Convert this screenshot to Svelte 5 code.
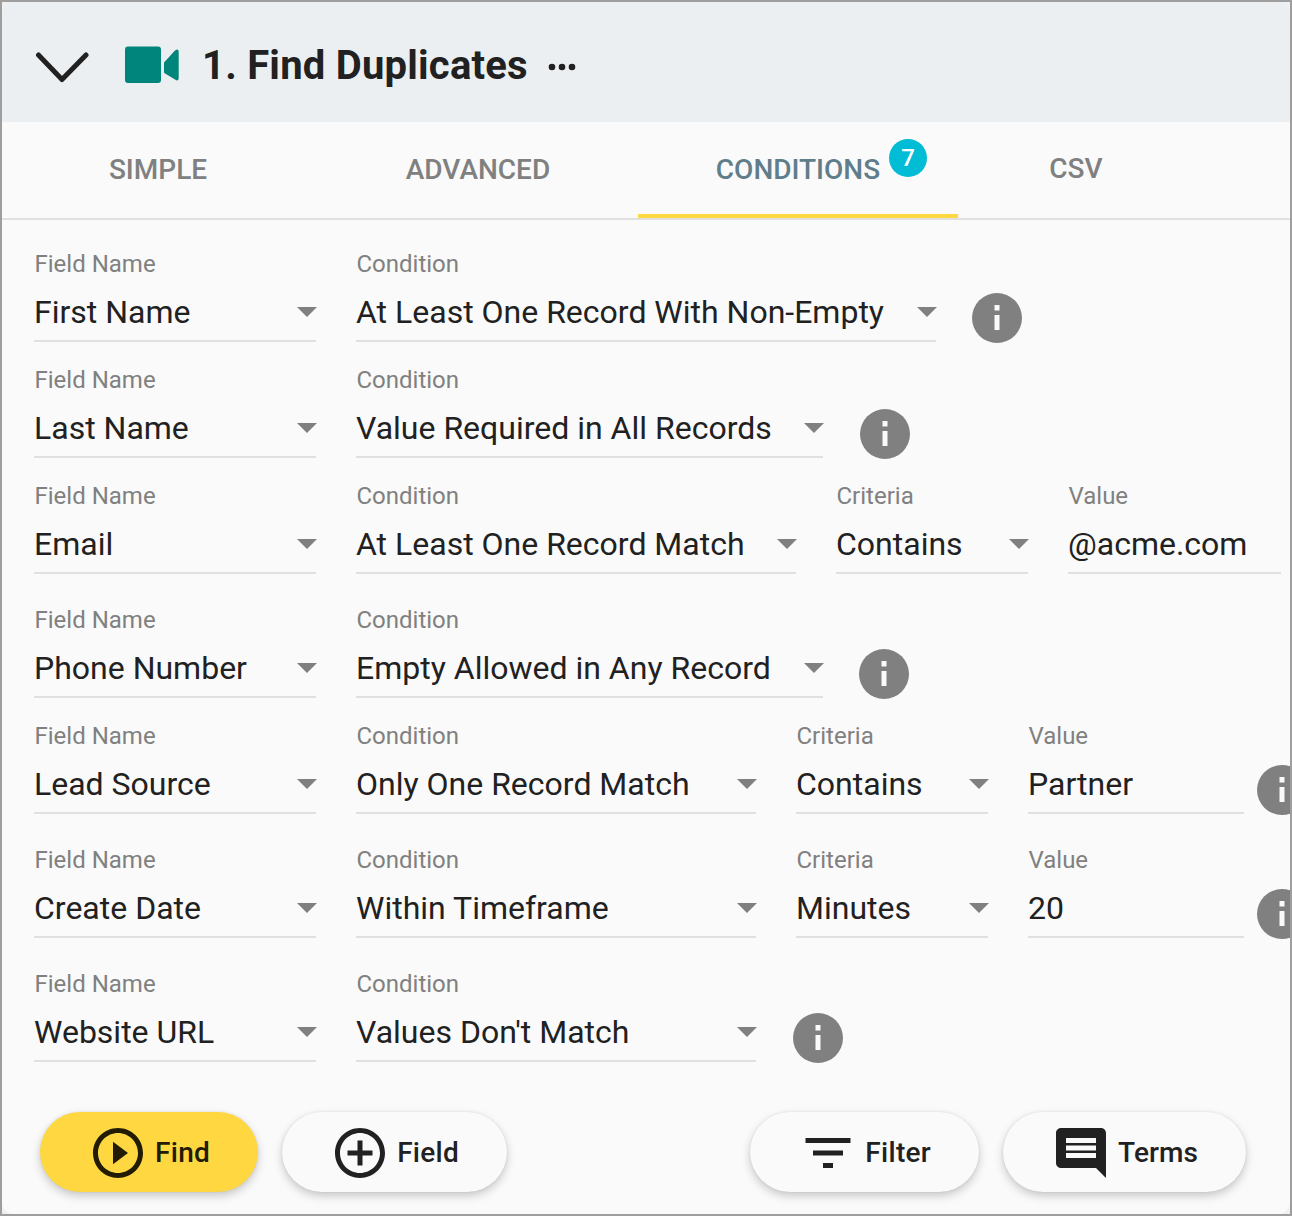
<script>
  const sel = (label, value, w) => ({ label, value, w, arrow: true });
  const txt = (label, value, w) => ({ label, value, w, arrow: false });
  const rows = [
    { cls: '', info: 'far', fields: [sel('Field Name', 'First Name', 'w282'), sel('Condition', 'At Least One Record With Non-Empty', 'w580')] },
    { cls: '', info: 'mid', fields: [sel('Field Name', 'Last Name', 'w282'), sel('Condition', 'Value Required in All Records', 'w467')] },
    { cls: 'tall', info: '', fields: [sel('Field Name', 'Email', 'w282'), sel('Condition', 'At Least One Record Match', 'w440'), sel('Criteria', 'Contains', 'w192'), txt('Value', '@acme.com', 'w213')] },
    { cls: '', info: 'far', fields: [sel('Field Name', 'Phone Number', 'w282'), sel('Condition', 'Empty Allowed in Any Record', 'w467')] },
    { cls: 'tall', info: 'near', fields: [sel('Field Name', 'Lead Source', 'w282'), sel('Condition', 'Only One Record Match', 'w400'), sel('Criteria', 'Contains', 'w192'), txt('Value', 'Partner', 'w216')] },
    { cls: 'tall', info: 'near', fields: [sel('Field Name', 'Create Date', 'w282'), sel('Condition', 'Within Timeframe', 'w400'), sel('Criteria', 'Minutes', 'w192'), txt('Value', '20', 'w216')] },
    { cls: '', info: 'mid', fields: [sel('Field Name', 'Website URL', 'w282'), sel('Condition', "Values Don't Match", 'w400')] }
  ];
</script>

<div class="frame">
  <div class="card">
    <header class="head">
      <svg class="chev" width="54" height="32" viewBox="0 0 54 32"><path d="M3.500 4L27 28.500 51 4" fill="none" stroke="#212121" stroke-width="5" stroke-linecap="round" stroke-linejoin="round"/></svg>
      <svg class="cam" width="56" height="38" viewBox="0 0 56 38"><rect x="0" y="0.500" width="36" height="36.500" rx="3" fill="#00857c"/><path d="M39 16.500L50 4.500Q53.700 2 53.700 6V32Q53.700 36 50 33.500L40 27.500Q39 27 39 26Z" fill="#00857c"/></svg>
      <h1>1. Find Duplicates</h1>
      <svg class="dots" width="28" height="8" viewBox="0 0 28 8"><circle cx="4" cy="4" r="3.300" fill="#212121"/><circle cx="14" cy="4" r="3.300" fill="#212121"/><circle cx="24" cy="4" r="3.300" fill="#212121"/></svg>
    </header>

    <nav class="tabs">
      <div class="tab">SIMPLE</div>
      <div class="tab">ADVANCED</div>
      <div class="tab active">CONDITIONS<span class="badge">7</span></div>
      <div class="tab csv">CSV</div>
    </nav>

    <main class="rows">
      {#each rows as row}
        <div class="row {row.cls}">
          {#each row.fields as f}
            <div class="field {f.w}">
              <div class="label">{f.label}</div>
              <div class="value">
                <span>{f.value}</span>
                {#if f.arrow}<i class="arrow"></i>{/if}
              </div>
            </div>
          {/each}
          {#if row.info}
            <div class="info {row.info}">
              <svg width="50" height="50" viewBox="0 0 50 50"><circle cx="25" cy="25" r="25" fill="#808080"/><rect x="22.500" y="22" width="5" height="15" fill="#fafafa"/><rect x="22.500" y="12" width="5" height="5.500" fill="#fafafa"/></svg>
            </div>
          {/if}
        </div>
      {/each}
    </main>

    <footer class="actions">
      <div class="group">
        <button class="btn primary">
          <svg width="60" height="60" viewBox="0 0 24 24"><path fill="currentColor" d="M10 16.500l6-4.500-6-4.500v9zM12 2C6.480 2 2 6.480 2 12s4.480 10 10 10 10-4.480 10-10S17.520 2 12 2zm0 18c-4.410 0-8-3.590-8-8s3.590-8 8-8 8 3.590 8 8-3.590 8-8 8z"/></svg>
          Find
        </button>
        <button class="btn">
          <svg width="60" height="60" viewBox="0 0 24 24"><path fill="currentColor" d="M13 7h-2v4H7v2h4v4h2v-4h4v-2h-4V7zm-1-5C6.480 2 2 6.480 2 12s4.480 10 10 10 10-4.480 10-10S17.520 2 12 2zm0 18c-4.410 0-8-3.590-8-8s3.590-8 8-8 8 3.590 8 8-3.590 8-8 8z"/></svg>
          Field
        </button>
      </div>
      <div class="group">
        <button class="btn">
          <svg width="60" height="60" viewBox="0 0 24 24"><path fill="currentColor" d="M10 18h4v-2h-4v2zM3 6v2h18V6H3zm3 7h12v-2H6v2z"/></svg>
          Filter
        </button>
        <button class="btn tight">
          <svg width="60" height="60" viewBox="0 0 24 24"><path fill="currentColor" d="M21.990 4c0-1.100-.890-2-1.990-2H4c-1.100 0-2 .900-2 2v12c0 1.100.900 2 2 2h14l4 4-.010-18zM18 14H6v-2h12v2zm0-3H6V9h12v2zm0-3H6V6h12v2z"/></svg>
          Terms
        </button>
      </div>
    </footer>
  </div>
</div>

<style>
  :global(body) { margin: 0; background: #fff; }
  .frame {
    width: 1292px;
    height: 1216px;
    box-sizing: border-box;
    border: 2px solid #9e9e9e;
    background: #f0f0f0;
    font-family: Roboto, sans-serif;
    color: #212121;
  }
  .card {
    height: 100%;
    border-radius: 12px;
    overflow: hidden;
    background: #fafafa;
    display: flex;
    flex-direction: column;
  }
  .head {
    height: 120px;
    flex: none;
    background: #eceff1;
    display: flex;
    align-items: center;
    padding-left: 33px;
  }
  .chev { margin-top: 10px; }
  .cam { margin-left: 36px; margin-top: 6px; }
  h1 { margin: 8px 0 0 21px; font-size: 40px; font-weight: 700; line-height: 48px; white-space: nowrap; letter-spacing: 0.22px; }
  .dots { margin-left: 20px; margin-top: 10px; }

  .tabs {
    height: 98px;
    flex: none;
    box-sizing: border-box;
    border-bottom: 2px solid #e0e0e0;
    display: flex;
  }
  .tab {
    position: relative;
    width: 320px;
    height: 96px;
    box-sizing: border-box;
    display: flex;
    align-items: center;
    justify-content: center;
    font-size: 28px;
    font-weight: 500;
    color: #808080;
    padding-bottom: 2px;
  }
  .tab:first-child { margin-left: -4px; }
  .tab.active { color: #607d8b; padding-bottom: 1px; }
  .tab.active::after {
    content: '';
    position: absolute;
    left: 0;
    right: 0;
    bottom: 0;
    height: 4px;
    background: #ffd740;
  }
  .tab.csv { width: 236px; padding-bottom: 4px; }
  .badge {
    position: absolute;
    left: 251px;
    top: 17px;
    width: 38px;
    height: 38px;
    border-radius: 50%;
    background: #00bcd4;
    color: #fff;
    font-size: 24px;
    font-weight: 500;
    display: flex;
    align-items: center;
    justify-content: center;
  }

  .rows { padding: 30px 0 0 32px; flex: none; }
  .row { display: flex; align-items: flex-start; gap: 40px; margin-bottom: 24px; white-space: nowrap; }
  .row.tall { margin-bottom: 32px; }
  .field { flex: none; height: 92px; box-sizing: border-box; border-bottom: 2px solid #e0e0e0; }
  .w282 { width: 282px; }
  .w580 { width: 580px; }
  .w467 { width: 467px; }
  .w440 { width: 440px; }
  .w400 { width: 400px; }
  .w192 { width: 192px; }
  .w213 { width: 213px; }
  .w216 { width: 216px; }
  .label { height: 28px; line-height: 28px; font-size: 24px; color: #808080; padding-left: 0.500px; }
  .value { position: relative; height: 62px; display: flex; align-items: center; justify-content: space-between; font-size: 32px; padding-top: 6px; box-sizing: border-box; }
  .arrow {
    width: 0;
    height: 0;
    border-left: 10px solid transparent;
    border-right: 10px solid transparent;
    border-top: 10px solid #808080;
    margin-right: -1px;
    margin-top: -1px;
  }
  .info { flex: none; margin-top: 43px; margin-bottom: -1px; height: 50px; }
  .info.far { margin-left: -4px; }
  .info.mid { margin-left: -3px; }
  .info.near { margin-left: -27px; }
  .info svg { display: block; }

  .actions { display: flex; justify-content: space-between; padding: 26px 44px 0 38px; }
  .group { display: flex; gap: 24px; }
  .btn {
    height: 80px;
    border: 0;
    border-radius: 40px;
    padding: 0 48px;
    background: #fafafa;
    color: #212121;
    font-family: inherit;
    font-size: 28px;
    font-weight: 500;
    letter-spacing: 0.3px;
    display: flex;
    align-items: center;
    gap: 7px;
    box-shadow: 0 4px 10px rgba(0, 0, 0, 0.2), 0 0 3px rgba(0, 0, 0, 0.08);
  }
  .btn svg { margin-top: 2px; }
  .btn.tight { letter-spacing: 0.1px; }
  .btn.primary { background: #ffd740; color: #221c05; }
</style>
